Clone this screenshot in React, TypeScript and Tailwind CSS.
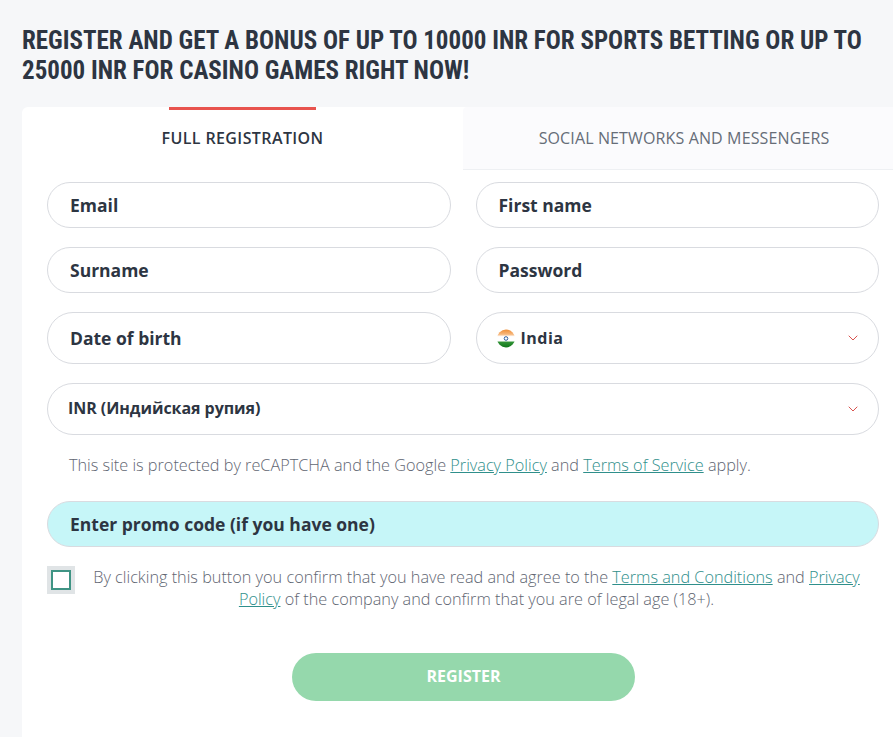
import { ChevronDown } from 'lucide-react'

const sans = { fontFamily: '"Open Sans", sans-serif' }

function Field({ label, className = 'h-[46px] bg-white' }: { label: string; className?: string }) {
  return (
    <div className={`flex items-center rounded-full border border-[#d9dbe0] pl-[22px] text-[17.5px] font-bold text-[#2d3542] ${className}`}>
      {label}
    </div>
  )
}

function Flag() {
  return (
    <svg width="18" height="19" viewBox="0 0 18 19" className="shrink-0">
      <defs>
        <clipPath id="flag-clip">
          <circle cx="9" cy="9.5" r="9" />
        </clipPath>
        <linearGradient id="flag-fill" x1="0" y1="0" x2="0" y2="1">
          <stop offset="0" stopColor="#ef8a2e" />
          <stop offset="0.28" stopColor="#f6b77c" />
          <stop offset="0.4" stopColor="#ffffff" />
          <stop offset="0.62" stopColor="#ffffff" />
          <stop offset="0.7" stopColor="#2f9134" />
          <stop offset="1" stopColor="#0c7417" />
        </linearGradient>
      </defs>
      <g clipPath="url(#flag-clip)">
        <rect width="18" height="19" fill="url(#flag-fill)" />
      </g>
      <circle cx="9" cy="9.5" r="1.8" fill="none" stroke="#2b5c9e" strokeWidth="1" />
    </svg>
  )
}

function SelectField({ children }: { children: React.ReactNode }) {
  return (
    <div className="flex h-[52px] items-center justify-between rounded-full border border-[#d9dbe0] bg-white pr-[17px] text-[16px] font-bold text-[#2d3542]">
      {children}
      <ChevronDown size={16} strokeWidth={1.5} className="text-[#d9534f]" />
    </div>
  )
}

export default function App() {
  return (
    <div className="min-h-[737px] overflow-hidden bg-[#f6f7f9] pt-[26px] pl-[22px]" style={sans}>
      <h1 className="w-[871px] text-[25px] leading-[30px] font-bold text-[#2d3542] [font-family:'Roboto_Condensed',Roboto,sans-serif]">
        REGISTER AND GET A BONUS OF UP TO 10000 INR FOR SPORTS BETTING OR UP TO 25000 INR FOR CASINO GAMES RIGHT NOW!
      </h1>

      <div className="mt-[21px] h-[630px] w-[883px] rounded-t-[6px] bg-white">
        <div className="flex h-[63px]">
          <div className="relative flex w-[441px] items-center justify-center pb-[1px] text-[16px] font-semibold tracking-[0.4px] text-[#2d3542]">
            <span className="absolute top-0 left-[147px] h-[3px] w-[147px] bg-[#e8534e]" />
            FULL REGISTRATION
          </div>
          <div className="flex flex-1 items-center justify-center rounded-tl-[4px] border-b border-[#eef0f3] bg-[#fbfbfd] text-[16px] tracking-[0.13px] text-[#666d78]">
            SOCIAL NETWORKS AND MESSENGERS
          </div>
        </div>

        <div className="pt-[12px] pr-[26px] pl-[25px]">
          <div className="grid grid-cols-2 gap-x-[25px] gap-y-[19px]">
            <Field label="Email" />
            <Field label="First name" />
            <Field label="Surname" />
            <Field label="Password" />
            <Field label="Date of birth" className="h-[52px] bg-white" />
            <SelectField>
              <span className="flex items-center gap-[6px] pl-[20px] tracking-[0.5px]">
                <Flag />
                India
              </span>
            </SelectField>
          </div>

          <div className="mt-[19px]">
            <SelectField>
              <span className="pb-[2px] pl-[20px] text-[16px] tracking-[-0.05px]">INR (Индийская рупия)</span>
            </SelectField>
          </div>

          <p className="mt-[18px] pl-[22px] text-[16.25px] leading-[24px] font-light text-[#5f6672]">
            This site is protected by reCAPTCHA and the Google <a className="text-[#2f8f8b] underline">Privacy Policy</a> and{' '}
            <a className="text-[#2f8f8b] underline">Terms of Service</a> apply.
          </p>

          <Field label="Enter promo code (if you have one)" className="mt-[24px] h-[46px] border-[#d5e4e8] bg-[#c6f6f8]" />

          <div className="mt-[19px] flex">
            <div className="flex size-[28px] shrink-0 items-center justify-center bg-[#e0e4e6]">
              <div className="size-[20px] border-2 border-[#3f9484] bg-white" />
            </div>
            <p className="flex-1 pr-[1px] text-center text-[16.25px] leading-[22px] font-light text-[#5f6672]">
              By clicking this button you confirm that you have read and agree to the <a className="text-[#2f8f8b] underline">Terms and Conditions</a> and{' '}
              <a className="text-[#2f8f8b] underline">Privacy Policy</a> of the company and confirm that you are of legal age (18+).
            </p>
          </div>

          <div className="mt-[43px] flex justify-center pl-[1px]">
            <button type="button" className="h-[48px] w-[343px] rounded-full bg-[#95d8ac] pb-[2px] text-[16px] font-bold text-white">
              REGISTER
            </button>
          </div>
        </div>
      </div>
    </div>
  )
}
